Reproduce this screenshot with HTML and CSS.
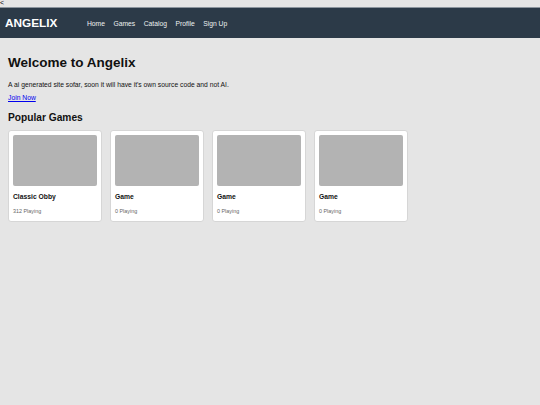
FILE: index.html
```html
<!DOCTYPE html>
<html>
<head>
<meta charset="utf-8">
<link rel="stylesheet" href="styles.css">
</head>
<body>
<div class="stray">&lt;</div>
<nav class="nav">
  <div class="logo">ANGELIX</div>
  <div class="links">
    <a href="#">Home</a>
    <a href="#">Games</a>
    <a href="#">Catalog</a>
    <a href="#">Profile</a>
    <a href="#">Sign Up</a>
  </div>
</nav>
<main class="main">
  <h1 class="title">Welcome to Angelix</h1>
  <p class="intro">A ai generated site sofar, soon it will have it's own source code and not AI.</p>
  <a class="join" href="#">Join Now</a>
  <h2 class="section">Popular Games</h2>
  <div class="grid">
    <div class="card"><div class="thumb"></div><div class="name">Classic Obby</div><div class="players">312 Playing</div></div>
    <div class="card"><div class="thumb"></div><div class="name">Game</div><div class="players">0 Playing</div></div>
    <div class="card"><div class="thumb"></div><div class="name">Game</div><div class="players">0 Playing</div></div>
    <div class="card"><div class="thumb"></div><div class="name">Game</div><div class="players">0 Playing</div></div>
  </div>
</main>
</body>
</html>
```
FILE: styles.css
```css
html, body {
  margin: 0;
  padding: 0;
}
body {
  background: #e5e5e5;
  font-family: "Liberation Sans", Arial, sans-serif;
  font-size: 6.75px;
  color: #111;
}
.stray {
  height: 7px;
  line-height: 6px;
  font-size: 6.75px;
  color: #000;
}
.nav {
  display: flex;
  align-items: center;
  height: 31px;
  padding: 0 5px;
  background: #2c3a48;
  border-top: 1px solid #8c959e;
  box-sizing: border-box;
}
.logo {
  font-size: 11.8px;
  font-weight: bold;
  color: #fff;
  margin-right: 29.5px;
}
.links {
  display: flex;
  gap: 8.5px;
}
.links a {
  color: #ecf0f1;
  text-decoration: none;
  font-size: 6.75px;
}
.main {
  padding: 17px 8px 0;
}
.title {
  margin: 0;
  font-size: 13.5px;
  font-weight: bold;
  line-height: 15.5px;
}
.intro {
  margin: 10px 0 0;
  line-height: 7.8px;
}
.join {
  display: block;
  margin-top: 6.2px;
  line-height: 7.8px;
  color: #0000ee;
  text-decoration: underline;
  width: max-content;
}
.section {
  margin: 9.3px 0 0;
  font-size: 10.2px;
  line-height: 11.7px;
  font-weight: bold;
}
.grid {
  display: flex;
  gap: 8px;
  margin-top: 7px;
}
.card {
  width: 94px;
  height: 92px;
  box-sizing: border-box;
  background: #fff;
  border: 1px solid #d6d6d6;
  border-radius: 3px;
  padding: 4px;
}
.thumb {
  height: 51px;
  background: #b3b3b3;
  border-radius: 2px;
}
.name {
  margin-top: 6.5px;
  font-weight: bold;
  line-height: 7.8px;
}
.players {
  margin-top: 7.2px;
  font-size: 5.4px;
  line-height: 6.2px;
  color: #666;
}
```
